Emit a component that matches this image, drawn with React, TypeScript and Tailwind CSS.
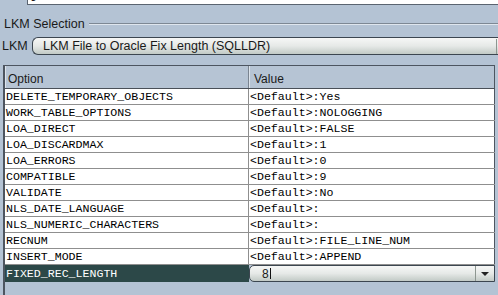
const rows: [string, string][] = [
  ['DELETE_TEMPORARY_OBJECTS', '<Default>:Yes'],
  ['WORK_TABLE_OPTIONS', '<Default>:NOLOGGING'],
  ['LOA_DIRECT', '<Default>:FALSE'],
  ['LOA_DISCARDMAX', '<Default>:1'],
  ['LOA_ERRORS', '<Default>:0'],
  ['COMPATIBLE', '<Default>:9'],
  ['VALIDATE', '<Default>:No'],
  ['NLS_DATE_LANGUAGE', '<Default>:'],
  ['NLS_NUMERIC_CHARACTERS', '<Default>:'],
  ['RECNUM', '<Default>:FILE_LINE_NUM'],
  ['INSERT_MODE', '<Default>:APPEND'],
];

const mono = "font-['Liberation_Mono',monospace] text-[11.6px] text-black";

function ArrowDown() {
  return (
    <svg width="10" height="6" viewBox="0 0 10 6">
      <path d="M1 1 L9 1 L5 5 Z" fill="#222" />
    </svg>
  );
}

export default function App() {
  return (
    <div className="w-[498px] h-[295px] overflow-hidden bg-[#b4c3d4] font-['Liberation_Sans',Arial,sans-serif] text-[12px] text-[#1a1a1a] flex flex-col">
      {/* name field, cut off at top */}
      <div className="h-[5px] overflow-hidden flex items-end pl-[27px]">
        <div className="h-[20px] w-full bg-white border border-[#5a6470] border-r-0 flex items-center pl-[3px] shrink-0">
          <span className="font-['Liberation_Mono',monospace] text-[12px] leading-none">job_</span>
        </div>
      </div>

      {/* section title */}
      <div className="h-[28px] flex items-center pl-[4px] pt-[10px]">
        <span className="text-[12.5px]">LKM Selection</span>
        <div className="flex-1 ml-[4px] h-[2px] border-t border-[#7d8894] border-b border-b-[#dfe6ee]" />
      </div>

      {/* LKM combo */}
      <div className="h-[18px] flex items-center mt-[4px]">
        <span className="pl-[2px] w-[32px] text-[12.5px] pt-[1px]">LKM</span>
        <div className="flex-1 h-[18px] rounded-l-[6px] border border-[#3c4650] border-r-0 bg-gradient-to-b from-[#f6f7f6] via-[#e6e9e7] to-[#c2cac6] flex items-center pl-[10px] pt-[1px] mr-[-4px]">
          <span className="text-[12.5px]">LKM File to Oracle Fix Length (SQLLDR)</span>
          <div className="ml-auto w-[6px] h-full border-l border-[#8d9690]" />
        </div>
      </div>

      {/* options table */}
      <div className="mt-[10px] ml-[3px] mr-[3px] flex-1 border-l-2 border-t border-[#4d5560] flex flex-col">
        <div className="flex h-[23px] border-b border-[#4a5058] bg-[#b6c4d4]">
          <div className="w-[244px] flex items-center pl-[2px] pt-[3px] border-r border-[#7a8490] border-l border-l-[#dde4ec] text-[12px]">
            Option
          </div>
          <div className="flex-1 flex items-center pl-[4px] pt-[3px] border-r border-[#4d5560] border-l border-l-[#dde4ec] text-[12px]">
            Value
          </div>
        </div>
        {rows.map(([k, v]) => (
          <div key={k} className="flex h-[16px] bg-white border-b border-[#8f8f8f]">
            <div className={`w-[244px] flex items-center pl-[1px] border-r border-[#8f8f8f] ${mono}`}>
              <span className="whitespace-pre">{k}</span>
            </div>
            <div className={`flex-1 flex items-center pl-[1px] border-r border-[#4d5560] ${mono}`}>
              <span className="whitespace-pre">{v}</span>
            </div>
          </div>
        ))}
        <div className="flex h-[17px]">
          <div className="w-[244px] bg-[#2c4848] flex items-center pl-[1px] font-['Liberation_Mono',monospace] text-[11.6px] text-white">
            FIXED_REC_LENGTH
          </div>
          <div className="flex-1 flex h-[17px] rounded-l-[5px] border border-[#3c4650] bg-gradient-to-b from-[#f6f7f6] via-[#e6e9e7] to-[#c2cac6] items-center pl-[12px]">
            <span className="text-[12px] leading-none">8</span>
            <span className="w-px h-[11px] bg-[#111] ml-[1px]" />
            <div className="ml-auto w-[19px] h-full border-l border-[#8d9690] rounded-r-[4px] flex items-center justify-center">
              <ArrowDown />
            </div>
          </div>
        </div>
      </div>
    </div>
  );
}
